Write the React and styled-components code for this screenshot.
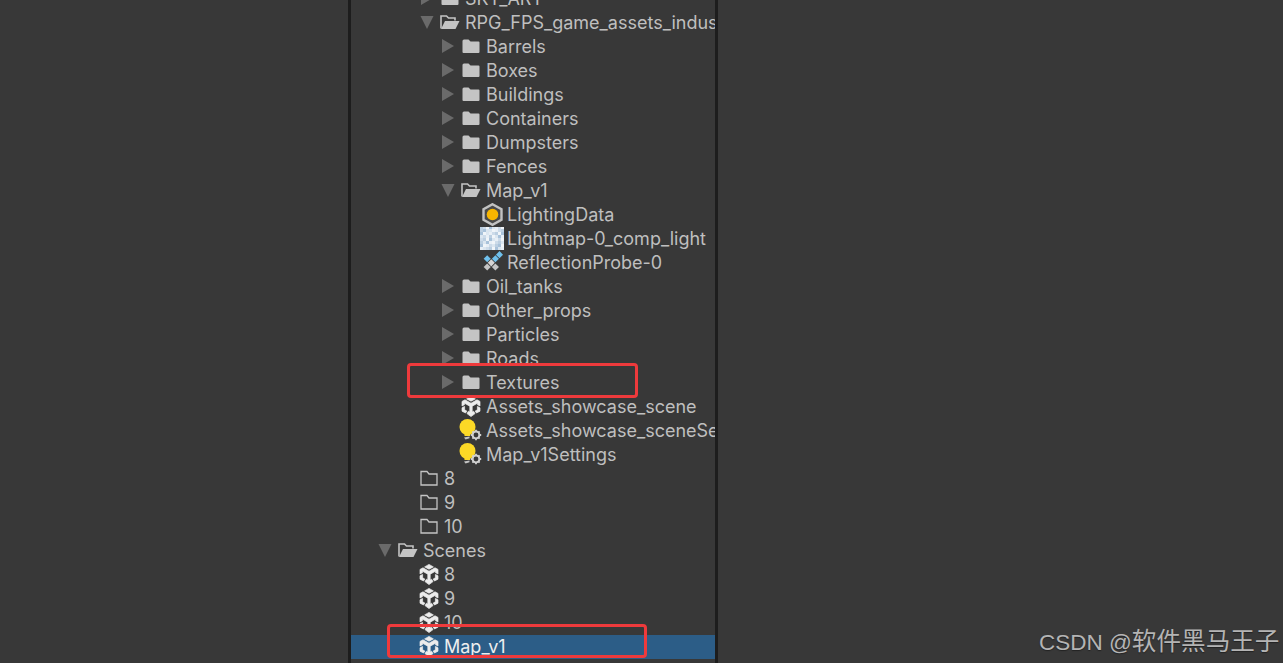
import React from "react";
import styled, { createGlobalStyle } from "styled-components";

const Global = createGlobalStyle`
  html, body { margin: 0; padding: 0; height: 100%; background: #383838; overflow: hidden; }
  #root { height: 100%; }
`;

const Screen = styled.div`
  position: relative;
  width: 1283px;
  height: 663px;
  display: grid;
  grid-template-columns: 348px 370px 1fr;
  background: #383838;
  overflow: hidden;
  font-family: Inter, "Noto Sans", sans-serif;
`;

const Panel = styled.section`
  grid-column: 2;
  height: 663px;
  overflow: hidden;
  border-left: 3px solid #1d1d1d;
  border-right: 3px solid #1d1d1d;
  background: #383838;
`;

const Tree = styled.ul`
  list-style: none;
  margin: -13px 0 0;
  padding: 0;
`;

const Row = styled.li`
  box-sizing: border-box;
  height: 24px;
  display: flex;
  align-items: center;
  padding: 0 0 2px ${(p) => 26 + p.$level * 21}px;
  background: ${(p) => (p.$selected ? "#2c5d87" : "transparent")};
  color: ${(p) => (p.$selected ? "#eeeeee" : "#bfbfbf")};
  font-size: 18px;
  white-space: nowrap;
  overflow: hidden;
`;

const ArrowSlot = styled.span`
  flex: none;
  width: 16px;
  height: 16px;
  margin-right: 6px;
  display: flex;
  align-items: center;
  justify-content: center;
  svg { display: block; }
`;

const IconSlot = styled.span`
  flex: none;
  width: 18px;
  height: 18px;
  margin-right: 6px;
  display: flex;
  align-items: center;
  justify-content: center;
  svg { display: block; flex: none; overflow: visible; }
`;

const Label = styled.span`
  flex: none;
`;

const Callout = styled.div`
  position: absolute;
  left: ${(p) => p.$x}px;
  top: ${(p) => p.$y}px;
  width: ${(p) => p.$w}px;
  height: ${(p) => p.$h}px;
  box-sizing: border-box;
  border: 3px solid #ee3a3c;
  border-radius: 4px;
`;

const Watermark = styled.div`
  position: absolute;
  left: 1039px;
  top: 624px;
  color: #b4b4b4;
  font-family: "Liberation Sans", "Noto Sans CJK SC", sans-serif;
  font-size: 22.5px;
  line-height: 30px;
  white-space: nowrap;
  text-shadow: 0 1px 1px #222;
`;

const WatermarkCjk = styled.span`
  font-family: "Noto Sans CJK SC", sans-serif;
  font-size: 24.6px;
`;

const Arrow = ({ open }) => (
  <svg width="16" height="16" viewBox="0 0 16 16">
    {open ? <polygon points="1.5,2 14.5,2 8,15" fill="#6a6a6a" /> : <polygon points="2,1 14,8 2,15" fill="#6a6a6a" />}
  </svg>
);

const FolderClosed = () => (
  <svg width="18" height="16" viewBox="0 0 18 16">
    <path d="M0.5 3 Q0.5 1.5 2 1.5 H6.5 L8.5 3.5 H16.5 Q17.5 3.5 17.5 4.5 V14 Q17.5 15 16.5 15 H1.5 Q0.5 15 0.5 14 Z" fill="#c4c4c4" />
  </svg>
);

const FolderOpen = () => (
  <svg width="20" height="16" viewBox="0 0 20 16">
    <path d="M1 14.5 V2 H6.5 L8.5 4 H15 V6.5" fill="none" stroke="#c4c4c4" strokeWidth="1.6" />
    <path d="M5 7 H19.5 L15.5 15 H1 Z" fill="#c4c4c4" />
  </svg>
);

const FolderEmpty = () => (
  <svg width="18" height="16" viewBox="0 0 18 16">
    <path d="M1 15 V1.5 H7 L9 4 H17 V15 Z" fill="none" stroke="#c4c4c4" strokeWidth="1.3" />
  </svg>
);

const UnityCube = () => (
  <svg width="20" height="21" viewBox="0 0 20 21">
    <g fill="#ececec" stroke="#ececec" strokeWidth="0.7" strokeLinejoin="round">
      <path d="M10 0.4 L14.4 2.9 L10 5.2 L5.6 2.9 Z" />
      <path d="M16 3.8 L19 5.4 V10 L16.4 8.6 V7.2 L11.2 10.2 V16 L12.6 15.2 L14 17.6 L10 20.6 L6 17.6 L7.4 15.2 L8.8 16 V10.2 L3.6 7.2 V8.6 L1 10 V5.4 L4 3.8 L10 7.2 Z" />
      <path d="M1 11.8 L3.6 10.4 V13.8 L5.8 15 L4.6 17 L1 15.2 Z M19 11.8 L16.4 10.4 V13.8 L14.2 15 L15.4 17 L19 15.2 Z" />
    </g>
  </svg>
);

const LightingData = () => (
  <svg width="21" height="23" viewBox="0 0 21 23">
    <polygon points="10.5,1.2 19.5,6.3 19.5,16.7 10.5,21.8 1.5,16.7 1.5,6.3" fill="#4a4a4a" stroke="#c2c2c2" strokeWidth="2.4" />
    <circle cx="10.5" cy="11.5" r="5.8" fill="#f7b500" />
  </svg>
);

const Lightmap = () => {
  const cells = [];
  const seq = "dbfaecbfdaeefcbdafecbdfaebcdfeacbdfaecbfdeacfbdeafcbedafcebdfaecb";
  const cols = { a: "#a9c2da", b: "#cddbe9", c: "#e8eff6", d: "#bccfe1", e: "#dbe6f0", f: "#f1f5f9" };
  for (let i = 0; i < 64; i++) {
    cells.push(<rect key={i} x={(i % 8) * 3} y={Math.floor(i / 8) * 3} width="3" height="3" fill={cols[seq[i]]} />);
  }
  return (
    <svg width="24" height="24" viewBox="0 0 24 24">
      <defs><filter id="soft"><feGaussianBlur stdDeviation="0.6" /></filter></defs>
      <g filter="url(#soft)">{cells}</g>
    </svg>
  );
};

const Probe = () => (
  <svg width="20" height="20" viewBox="0 0 20 20">
    <g transform="rotate(45 10 10)">
      <rect x="7.6" y="-3" width="5" height="5" fill="#6fc0ec" />
      <rect x="7.6" y="2.8" width="5" height="5" fill="#6fc0ec" />
      <rect x="1.8" y="8.6" width="5" height="5" fill="#6fc0ec" />
      <rect x="7.6" y="8.6" width="5" height="5" fill="#d5d5d5" />
      <rect x="13.4" y="8.6" width="5" height="5" fill="#c4c4c4" />
      <rect x="7.6" y="14.4" width="5" height="5" fill="#c4c4c4" />
    </g>
  </svg>
);

const BulbGear = () => (
  <svg width="24" height="24" viewBox="0 0 24 24">
    <circle cx="8.5" cy="9" r="8" fill="#fcd926" />
    <path d="M5.5 16 H11 V18 H5.5 Z" fill="#fcd926" />
    <path d="M5 19.5 L10.5 18.6 V20.2 L6.5 21.6 Z" fill="#c4c4c4" />
    <circle cx="17" cy="17" r="3.4" fill="none" stroke="#d0d0d0" strokeWidth="2" />
    <path d="M17 11.8 V14 M17 20 V22.2 M11.8 17 H14 M20 17 H22.2 M13.4 13.4 L15 15 M19 19 L20.6 20.6 M13.4 20.6 L15 19 M19 15 L20.6 13.4" stroke="#d0d0d0" strokeWidth="1.8" />
  </svg>
);

const icons = {
  closed: FolderClosed,
  open: FolderOpen,
  empty: FolderEmpty,
  unity: UnityCube,
  lighting: LightingData,
  lightmap: Lightmap,
  probe: Probe,
  bulb: BulbGear,
};

const rows = [
  { level: 2, arrow: "closed", icon: "closed", text: "SKT_ART" },
  { level: 2, arrow: "open", icon: "open", text: "RPG_FPS_game_assets_industrial" },
  { level: 3, arrow: "closed", icon: "closed", text: "Barrels" },
  { level: 3, arrow: "closed", icon: "closed", text: "Boxes" },
  { level: 3, arrow: "closed", icon: "closed", text: "Buildings" },
  { level: 3, arrow: "closed", icon: "closed", text: "Containers" },
  { level: 3, arrow: "closed", icon: "closed", text: "Dumpsters" },
  { level: 3, arrow: "closed", icon: "closed", text: "Fences" },
  { level: 3, arrow: "open", icon: "open", text: "Map_v1" },
  { level: 4, icon: "lighting", text: "LightingData" },
  { level: 4, icon: "lightmap", text: "Lightmap-0_comp_light" },
  { level: 4, icon: "probe", text: "ReflectionProbe-0" },
  { level: 3, arrow: "closed", icon: "closed", text: "Oil_tanks" },
  { level: 3, arrow: "closed", icon: "closed", text: "Other_props" },
  { level: 3, arrow: "closed", icon: "closed", text: "Particles" },
  { level: 3, arrow: "closed", icon: "closed", text: "Roads" },
  { level: 3, arrow: "closed", icon: "closed", text: "Textures" },
  { level: 3, icon: "unity", text: "Assets_showcase_scene" },
  { level: 3, icon: "bulb", text: "Assets_showcase_sceneSettings" },
  { level: 3, icon: "bulb", text: "Map_v1Settings" },
  { level: 1, icon: "empty", text: "8" },
  { level: 1, icon: "empty", text: "9" },
  { level: 1, icon: "empty", text: "10" },
  { level: 0, arrow: "open", icon: "open", text: "Scenes" },
  { level: 1, icon: "unity", text: "8" },
  { level: 1, icon: "unity", text: "9" },
  { level: 1, icon: "unity", text: "10" },
  { level: 1, icon: "unity", text: "Map_v1", selected: true },
  { level: 0, arrow: "closed", icon: "closed", text: "" },
];

export default function App() {
  return (
    <Screen>
      <Global />
      <Panel>
        <Tree>
          {rows.map((r, i) => {
            const Icon = icons[r.icon];
            return (
              <Row key={i} $level={r.level} $selected={r.selected}>
                <ArrowSlot>{r.arrow && <Arrow open={r.arrow === "open"} />}</ArrowSlot>
                <IconSlot><Icon /></IconSlot>
                <Label>{r.text}</Label>
              </Row>
            );
          })}
        </Tree>
      </Panel>
      <Callout $x={407} $y={363} $w={231} $h={35} />
      <Callout $x={387} $y={624} $w={260} $h={34} />
      <Watermark>CSDN @<WatermarkCjk>软件黑马王子</WatermarkCjk></Watermark>
    </Screen>
  );
}
